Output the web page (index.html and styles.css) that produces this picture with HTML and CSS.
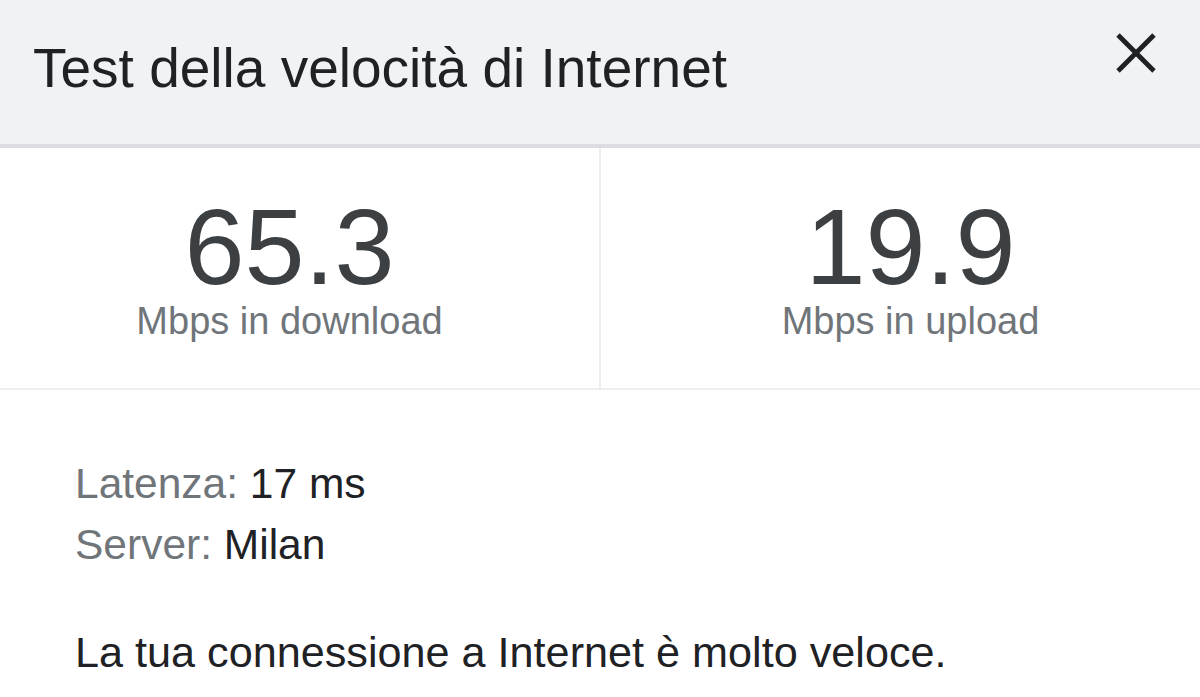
FILE: index.html
```html
<!DOCTYPE html>
<html>
<head>
    <title>Test della velocità di Internet</title>
    <link rel="stylesheet" href="styles.css">
</head>
<body>
    <div class="card">
        <div class="header">
            <h1 class="title">Test della velocità di Internet</h1>
            <button class="close" aria-label="Chiudi">
                <svg width="42" height="42" viewBox="0 0 42 42">
                    <path d="M3 3L39 39M39 3L3 39" stroke="#202124" stroke-width="4.8" fill="none"/>
                </svg>
            </button>
        </div>

        <div class="results">
            <div class="result">
                <div class="value">65.3</div>
                <div class="unit">Mbps in download</div>
            </div>
            <div class="result">
                <div class="value">19.9</div>
                <div class="unit">Mbps in upload</div>
            </div>
        </div>

        <div class="details">
            <div class="row"><span class="label">Latenza:</span> 17 ms</div>
            <div class="row"><span class="label">Server:</span> Milan</div>
            <p class="summary">La tua connessione a Internet è molto veloce.</p>
        </div>
    </div>
</body>
</html>
```

FILE: styles.css
```css
body {
    margin: 0;
    background: #fff;
    font-family: "Liberation Sans", Arial, sans-serif;
    overflow: hidden;
}
.card {
    width: 1200px;
}
.header {
    display: flex;
    justify-content: space-between;
    align-items: flex-start;
    height: 148px;
    padding: 0 43px 0 33px;
    background: #f1f2f4;
    border-bottom: 4px solid #dcdde0;
    box-sizing: border-box;
}
.title {
    margin: 37px 0 0;
    font-size: 55px;
    line-height: 62px;
    font-weight: normal;
    color: #202124;
}
.close {
    border: none;
    background: none;
    padding: 0;
    margin-top: 32px;
    cursor: pointer;
}
.close svg {
    display: block;
}
/* the two columns run a little past the visible edges */
.results {
    display: flex;
    height: 242px;
    margin: 0 -20px;
    border-bottom: 2px solid #eeeeee;
    box-sizing: border-box;
}
.result {
    flex: 1;
    display: flex;
    flex-direction: column;
    align-items: center;
    padding-top: 45px;
}
.result + .result {
    border-left: 2px solid #eeeeee;
}
.value {
    font-size: 108px;
    line-height: 108px;
    color: #3c4043;
}
.unit {
    font-size: 38px;
    line-height: 40px;
    color: #70757a;
}
.details {
    padding: 63px 75px 0;
    color: #202124;
    font-size: 42.5px;
}
.row {
    line-height: 61px;
}
.label {
    color: #70757a;
}
.summary {
    margin: 47px 0 0;
    font-size: 43.2px;
    line-height: 61px;
}
```
